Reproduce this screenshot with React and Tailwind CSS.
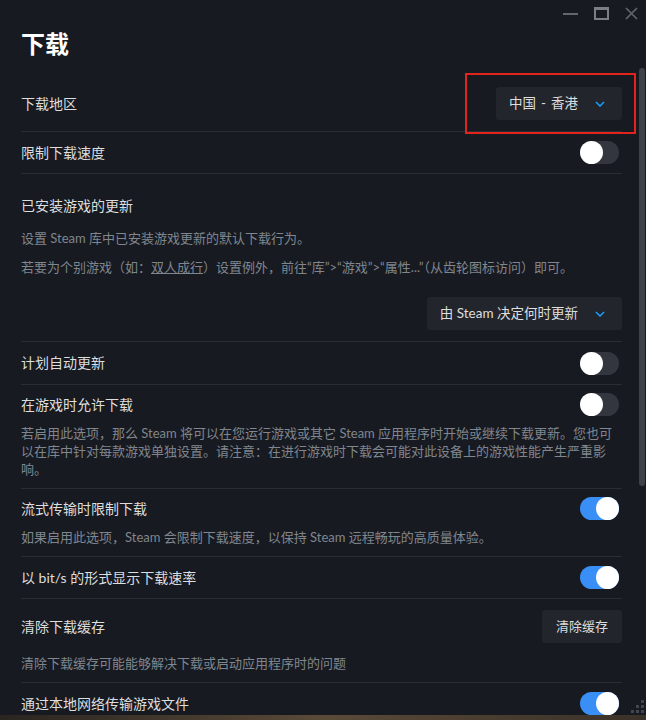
import React from 'react';

const label = 'text-[14px] leading-[20px] text-[#dcdedf]';
const desc = 'text-[13px] leading-[18px] text-[#80868e]';

function Toggle({ on }) {
  return (
    <div
      className={`flex h-[23px] w-[39px] shrink-0 items-center rounded-full ${
        on ? 'justify-end bg-[#3a8ff6]' : 'justify-start bg-[#33363e]'
      }`}
    >
      <div className="h-[23px] w-[23px] rounded-full bg-white" />
    </div>
  );
}

function Chevron() {
  return (
    <svg width="10" height="6" viewBox="0 0 10 6" className="shrink-0">
      <polyline points="1,1 5,5 9,1" fill="none" stroke="#1a9fff" strokeWidth="1.5" />
    </svg>
  );
}

function Select({ children }) {
  return (
    <div className="flex h-[33px] items-center gap-[17px] rounded-[3px] bg-[#22252c] pl-[13px] pr-[17px]">
      <span className="text-[13.5px] text-[#dcdedf]">{children}</span>
      <Chevron />
    </div>
  );
}

function Divider() {
  return <div className="h-px bg-[#2a2d34]" />;
}

function ToggleRow({ title, on, h = 'h-[41px]' }) {
  return (
    <div className={`flex ${h} items-center justify-between pr-[3px]`}>
      <span className={label}>{title}</span>
      <Toggle on={on} />
    </div>
  );
}

export default function App() {
  return (
    <div className="w-[646px] h-[720px] overflow-hidden bg-[#171a21] font-['Lato','Noto_Sans_CJK_SC',sans-serif]">
      <div className="relative h-[715px] overflow-hidden">
        {/* window controls */}
        <div className="flex h-[26px] items-start justify-end gap-[16px] pr-[8px] pt-[7px]">
          <div className="mt-[6px] h-[2px] w-[15px] bg-[#62676e]" />
          <div className="h-[13px] w-[15px] border-2 border-t-[3px] border-[#7a7f86]" />
          <svg width="13" height="13" viewBox="0 0 13 13">
            <path d="M1 1 L12 12 M12 1 L1 12" stroke="#62676e" strokeWidth="1.6" />
          </svg>
        </div>

        <div className="w-[622px] pl-[21px]">
          <h1 className="pt-[2px] text-[24px] font-bold leading-[32px] text-white">下载</h1>

          <div className="mt-[16px] flex h-[55px] items-center justify-between">
            <span className={label}>下载地区</span>
            <Select>
              中国<span className="mx-[5px]">-</span>香港
            </Select>
          </div>
          <Divider />
          <ToggleRow title="限制下载速度" on={false} />
          <Divider />

          <div className="pt-[22px] pb-[11px]">
            <div className={label}>已安装游戏的更新</div>
            <p className={`${desc} mt-[13px]`}>设置 Steam 库中已安装游戏更新的默认下载行为。</p>
            <p className={`${desc} mt-[11px]`}>
              若要为个别游戏（如：<span className="underline">双人成行</span>）设置例外，前往“库”&gt;“游戏”&gt;“属性...”（从齿轮图标访问）即可。
            </p>
            <div className="mt-[21px] flex justify-end">
              <Select>由 Steam 决定何时更新</Select>
            </div>
          </div>
          <Divider />
          <ToggleRow title="计划自动更新" on={false} h="h-[42px]" />
          <Divider />

          <div className="pb-[10px]">
            <ToggleRow title="在游戏时允许下载" on={false} h="h-[39px]" />
            <p className={desc}>
              若启用此选项，那么 Steam 将可以在您运行游戏或其它 Steam 应用程序时开始或继续下载更新。您也可以在库中针对每款游戏单独设置。请注意：在进行游戏时下载会可能对此设备上的游戏性能产生严重影响。
            </p>
          </div>
          <Divider />

          <div className="pb-[10px]">
            <ToggleRow title="流式传输时限制下载" on h="h-[39px]" />
            <p className={desc}>如果启用此选项，Steam 会限制下载速度，以保持 Steam 远程畅玩的高质量体验。</p>
          </div>
          <Divider />
          <ToggleRow title="以 bit/s 的形式显示下载速率" on />
          <Divider />

          <div className="pt-[11px] pb-[10px]">
            <div className="flex items-center justify-between">
              <span className={label}>清除下载缓存</span>
              <div className="flex h-[33px] items-center rounded-[3px] bg-[#22252c] px-[14px] text-[13px] text-[#dcdedf]">
                清除缓存
              </div>
            </div>
            <p className={`${desc} mt-[11px]`}>清除下载缓存可能能够解决下载或启动应用程序时的问题</p>
          </div>
          <Divider />
          <ToggleRow title="通过本地网络传输游戏文件" on />
        </div>

        {/* scrollbar */}
        <div className="absolute right-[1px] top-[68px] h-[418px] w-[6px] rounded-[3px] bg-[#3d4249]" />

        {/* resize grip */}
        <div className="absolute bottom-[2px] right-[2px] grid grid-cols-3 gap-[2px]">
          <span className="h-[3px] w-[3px]" />
          <span className="h-[3px] w-[3px]" />
          <span className="h-[3px] w-[3px] bg-[#41454c]" />
          <span className="h-[3px] w-[3px]" />
          <span className="h-[3px] w-[3px] bg-[#41454c]" />
          <span className="h-[3px] w-[3px] bg-[#41454c]" />
          <span className="h-[3px] w-[3px] bg-[#41454c]" />
          <span className="h-[3px] w-[3px] bg-[#41454c]" />
          <span className="h-[3px] w-[3px] bg-[#41454c]" />
        </div>

        {/* red highlight box */}
        <div className="absolute left-[465px] top-[73px] h-[61px] w-[171px] border-2 border-[#e3241c]" />
      </div>
      <div className="h-[5px] bg-gradient-to-r from-[#2a2520] via-[#5a4a38] to-[#3a3128]" />
    </div>
  );
}
